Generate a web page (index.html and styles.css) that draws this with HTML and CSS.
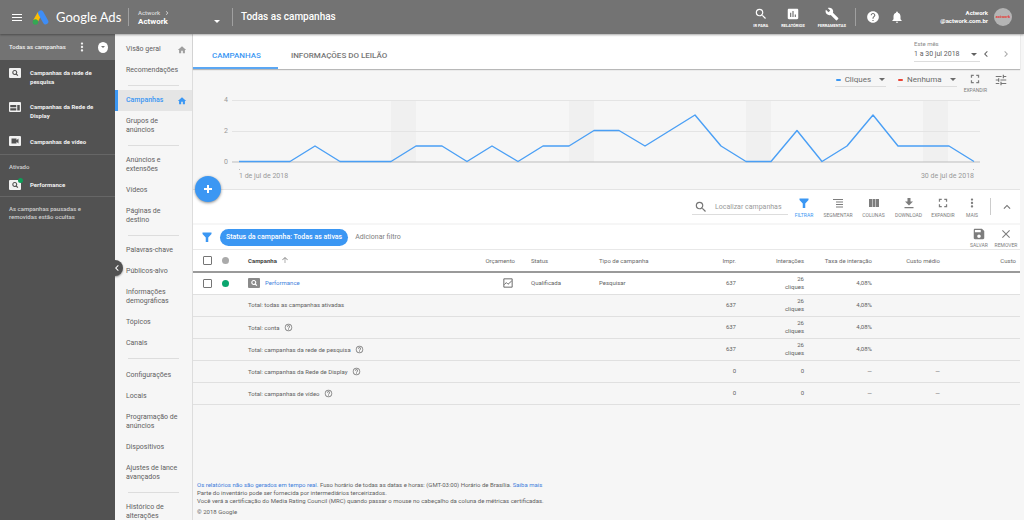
FILE: index.html
```html
<!DOCTYPE html>
<html lang="pt-BR">
<head>
<meta charset="utf-8">
<title>Todas as campanhas - Google Ads</title>
<meta name="viewport" content="width=device-width, initial-scale=1">
<link rel="stylesheet" href="styles.css">
</head>
<body>
<svg class="sprite" aria-hidden="true">
  <symbol id="i-search" viewBox="0 0 24 24"><path d="M15.5 14h-.79l-.28-.27A6.47 6.47 0 0 0 16 9.5 6.5 6.5 0 1 0 9.5 16c1.61 0 3.09-.59 4.23-1.57l.27.28v.79l5 4.99L20.49 19l-4.99-5zm-6 0C7.01 14 5 11.99 5 9.5S7.01 5 9.5 5 14 7.01 14 9.5 11.99 14 9.5 14z"/></symbol>
  <symbol id="i-chart" viewBox="0 0 24 24"><path d="M19 3H5c-1.100 0-2 .9-2 2v14c0 1.100.9 2 2 2h14c1.100 0 2-.9 2-2V5c0-1.100-.9-2-2-2zM9 17H7v-7h2v7zm4 0h-2V7h2v10zm4 0h-2v-4h2v4z"/></symbol>
  <symbol id="i-wrench" viewBox="0 0 24 24"><path d="M22.700 19l-9.100-9.100c.9-2.300.4-5-1.500-6.900-2-2-5-2.400-7.400-1.300L9 6 6 9 1.600 4.700C.4 7.100.9 10.100 2.900 12.100c1.900 1.900 4.600 2.400 6.900 1.500l9.100 9.100c.4.4 1 .4 1.400 0l2.300-2.300c.5-.4.5-1.100.1-1.400z"/></symbol>
  <symbol id="i-help" viewBox="0 0 24 24"><path d="M12 2C6.480 2 2 6.480 2 12s4.480 10 10 10 10-4.480 10-10S17.520 2 12 2zm1 17h-2v-2h2v2zm2.070-7.750l-.9.920C13.450 12.900 13 13.500 13 15h-2v-.5c0-1.100.45-2.100 1.170-2.830l1.240-1.260c.37-.36.59-.86.59-1.410 0-1.100-.9-2-2-2s-2 .9-2 2H8c0-2.210 1.790-4 4-4s4 1.790 4 4c0 .88-.36 1.680-.93 2.250z"/></symbol>
  <symbol id="i-help-o" viewBox="0 0 24 24"><path d="M11 18h2v-2h-2v2zm1-16C6.480 2 2 6.480 2 12s4.480 10 10 10 10-4.480 10-10S17.520 2 12 2zm0 18c-4.410 0-8-3.590-8-8s3.590-8 8-8 8 3.590 8 8-3.590 8-8 8zm0-14c-2.210 0-4 1.790-4 4h2c0-1.100.9-2 2-2s2 .9 2 2c0 2-3 1.750-3 5h2c0-2.250 3-2.500 3-5 0-2.210-1.790-4-4-4z"/></symbol>
  <symbol id="i-bell" viewBox="0 0 24 24"><path d="M12 22c1.100 0 2-.9 2-2h-4c0 1.100.9 2 2 2zm6-6v-5c0-3.070-1.640-5.640-4.500-6.320V4c0-.83-.67-1.500-1.500-1.500s-1.500.67-1.500 1.500v.68C7.630 5.360 6 7.920 6 11v5l-2 2v1h16v-1l-2-2z"/></symbol>
  <symbol id="i-home" viewBox="0 0 24 24"><path d="M10 20v-6h4v6h5v-8h3L12 3 2 12h3v8z"/></symbol>
  <symbol id="i-left" viewBox="0 0 24 24"><path d="M15.410 7.410L14 6l-6 6 6 6 1.410-1.410L10.830 12z"/></symbol>
  <symbol id="i-right" viewBox="0 0 24 24"><path d="M10 6L8.590 7.410 13.170 12l-4.580 4.590L10 18l6-6z"/></symbol>
  <symbol id="i-up" viewBox="0 0 24 24"><path d="M12 8l-6 6 1.410 1.410L12 10.830l4.590 4.580L18 14z"/></symbol>
  <symbol id="i-more" viewBox="0 0 24 24"><path d="M12 7.500c1.400 0 2.300-1 2.300-2.300S13.300 3 12 3s-2.300 1-2.300 2.200 1 2.300 2.300 2.300zm0 2.200c-1.300 0-2.300 1-2.300 2.300s1 2.300 2.300 2.300 2.300-1 2.300-2.300-1-2.300-2.300-2.300zm0 6.800c-1.300 0-2.300 1-2.300 2.300S10.700 21 12 21s2.300-1 2.300-2.200-1-2.300-2.300-2.300z"/></symbol>
  <symbol id="i-funnel" viewBox="0 0 24 24"><path d="M3 3h18v3l-6.500 7v9h-5v-9L3 6z"/></symbol>
  <symbol id="i-segment" viewBox="0 0 24 24"><path d="M2 4h20v2H2zM8 9h14v2H8zM8 14h14v2H8zM8 19h14v2H8z"/></symbol>
  <symbol id="i-columns" viewBox="0 0 24 24"><path d="M2 4h6v16H2zM9 4h6v16H9zM16 4h6v16h-6z"/></symbol>
  <symbol id="i-download" viewBox="0 0 24 24"><path d="M20 9h-5V2H9v7H4l8 8zM3 20v2.500h18V20z"/></symbol>
  <symbol id="i-expand" viewBox="0 0 24 24"><path d="M2 2h7v3H5v4H2zM15 2h7v7h-3V5h-4zM2 15h3v4h4v3H2zM19 15h3v7h-7v-3h4z"/></symbol>
  <symbol id="i-tune" viewBox="0 0 24 24"><path d="M3 17v2h6v-2H3zM3 5v2h10V5H3zm10 16v-2h8v-2h-8v-2h-2v6h2zM7 9v2H3v2h4v2h2V9H7zm14 4v-2H11v2h10zm-6-4h2V7h4V5h-4V3h-2v6z"/></symbol>
  <symbol id="i-save" viewBox="0 0 24 24"><path d="M17 3H5c-1.110 0-2 .9-2 2v14c0 1.100.89 2 2 2h14c1.100 0 2-.9 2-2V7l-4-4zm-5 16c-1.660 0-3-1.340-3-3s1.340-3 3-3 3 1.340 3 3-1.340 3-3 3zm3-10H5V5h10v4z"/></symbol>
  <symbol id="i-close" viewBox="0 0 24 24"><path d="M20 5.500L18.500 4 12 10.500 5.500 4 4 5.500l6.500 6.500L4 18.500 5.500 20l6.500-6.500 6.500 6.500 1.500-1.500-6.500-6.500z"/></symbol>
  <symbol id="i-campaign" viewBox="0 0 24 20"><path fill-rule="evenodd" d="M2 0h20a2 2 0 0 1 2 2v16a2 2 0 0 1-2 2H2a2 2 0 0 1-2-2V2a2 2 0 0 1 2-2zM11.500 4a5 5 0 1 0 2.600 9.300L17 16.200l1.600-1.600-2.900-2.900A5 5 0 0 0 11.500 4zm0 2.200a2.800 2.800 0 1 1 0 5.600 2.800 2.800 0 0 1 0-5.600z"/></symbol>
  <symbol id="i-display" viewBox="0 0 24 20"><path fill-rule="evenodd" d="M2 0h20a2 2 0 0 1 2 2v16a2 2 0 0 1-2 2H2a2 2 0 0 1-2-2V2a2 2 0 0 1 2-2zM2.500 6v4.500h12V6zM2.500 12.500V17h12v-4.500zM16.500 6v11h5V6z"/></symbol>
  <symbol id="i-video" viewBox="0 0 24 20"><path fill-rule="evenodd" d="M2 0h20a2 2 0 0 1 2 2v16a2 2 0 0 1-2 2H2a2 2 0 0 1-2-2V2a2 2 0 0 1 2-2zM5 5v10h10v-3.500l4 3.500V5l-4 3.500V5z"/></symbol>
  <symbol id="i-trend" viewBox="0 0 24 24"><path fill="none" stroke="currentColor" stroke-width="2.200" d="M2 2h20v20H2zM3 16l5-5 4 4 9-8"/></symbol>
  <symbol id="i-sort" viewBox="0 0 24 24"><path d="M11 21V7l-6 6-1.500-1.500L12 3l8.500 8.500L19 13l-6-6v14z"/></symbol>
</svg>

<header class="topbar">
  <div class="brand">
    <button class="burger" aria-label="Menu"><span></span><span></span><span></span></button>
    <svg class="logo" viewBox="0 0 48 44" aria-hidden="true">
      <path d="M22 10L9 33" fill="none" stroke="#fbbc04" stroke-width="14"/>
      <path d="M25 9L39 34" fill="none" stroke="#3f8df5" stroke-width="16" stroke-linecap="round"/>
      <circle cx="9" cy="35" r="8" fill="#34a853"/>
    </svg>
    <span class="brand-name">Google Ads</span>
  </div>
  <button class="account">
    <span class="account-names"><span class="parent">Actwork <svg class="ic8"><use href="#i-right"/></svg></span><strong>Actwork</strong></span>
    <span class="caret"></span>
  </button>
  <h1 class="title">Todas as campanhas</h1>
  <div class="tools">
    <button class="tool"><svg class="ic14"><use href="#i-search"/></svg>IR PARA</button>
    <button class="tool"><svg class="ic14"><use href="#i-chart"/></svg>RELATÓRIOS</button>
    <button class="tool"><svg class="ic14"><use href="#i-wrench"/></svg>FERRAMENTAS</button>
  </div>
  <div class="user">
    <button class="plain" aria-label="Ajuda"><svg class="ic14"><use href="#i-help"/></svg></button>
    <button class="plain" aria-label="Notificações"><svg class="ic14"><use href="#i-bell"/></svg></button>
    <span class="user-text">Actwork<br>@actwork.com.br</span>
    <span class="avatar">actwork</span>
  </div>
</header>

<div class="shell">
  <aside class="side">
    <div class="side-head">
      <span class="side-title">Todas as campanhas</span>
      <button class="plain" aria-label="Mais opções"><svg class="ic12"><use href="#i-more"/></svg></button>
      <button class="disc" aria-label="Abrir"><span class="caret"></span></button>
    </div>
    <nav class="side-list">
      <a href="#"><svg class="camp"><use href="#i-campaign"/></svg><span>Campanhas da rede de pesquisa</span></a>
      <a href="#"><svg class="camp"><use href="#i-display"/></svg><span>Campanhas da Rede de Display</span></a>
      <a href="#"><svg class="camp"><use href="#i-video"/></svg><span>Campanhas de vídeo</span></a>
    </nav>
    <div class="side-active">
      <p>Ativado</p>
      <a href="#"><span class="badged"><svg class="camp"><use href="#i-campaign"/></svg><i class="badge"></i></span><span>Performance</span></a>
    </div>
    <p class="side-note">As campanhas pausadas e removidas estão ocultas</p>
  </aside>

  <nav class="menu">
    <button class="handle" aria-label="Recolher"><svg class="ic12"><use href="#i-left"/></svg></button>
    <ul>
      <li><a href="#">Visão geral<svg class="home"><use href="#i-home"/></svg></a></li>
      <li><a href="#">Recomendações</a></li>
    </ul>
    <ul>
      <li><a class="current" href="#">Campanhas<svg class="home"><use href="#i-home"/></svg></a></li>
      <li><a href="#">Grupos de<br>anúncios</a></li>
    </ul>
    <ul>
      <li><a href="#">Anúncios e<br>extensões</a></li>
      <li><a href="#">Vídeos</a></li>
      <li><a href="#">Páginas de<br>destino</a></li>
    </ul>
    <ul>
      <li><a href="#">Palavras-chave</a></li>
      <li><a href="#">Públicos-alvo</a></li>
      <li><a href="#">Informações<br>demográficas</a></li>
      <li><a href="#">Tópicos</a></li>
      <li><a href="#">Canais</a></li>
    </ul>
    <ul class="wide">
      <li><a href="#">Configurações</a></li>
      <li><a href="#">Locais</a></li>
      <li><a href="#">Programação de<br>anúncios</a></li>
      <li><a href="#">Dispositivos</a></li>
      <li><a href="#">Ajustes de lance<br>avançados</a></li>
    </ul>
    <ul>
      <li><a href="#">Histórico de<br>alterações</a></li>
    </ul>
  </nav>

  <main class="main">
    <div class="tabs">
      <a class="tab active" href="#">CAMPANHAS</a>
      <a class="tab" href="#">INFORMAÇÕES DO LEILÃO</a>
      <div class="period">
        <button class="range"><small>Este mês</small><span>1 a 30 jul 2018<i class="caret"></i></span></button>
        <button class="plain" aria-label="Período anterior"><svg class="ic12"><use href="#i-left"/></svg></button>
        <button class="plain dim" aria-label="Próximo período"><svg class="ic12"><use href="#i-right"/></svg></button>
      </div>
    </div>

    <section class="chart">
      <div class="chart-controls">
        <button class="metric"><i class="dash blue"></i>Cliques<i class="caret"></i></button>
        <button class="metric"><i class="dash red"></i>Nenhuma<i class="caret"></i></button>
        <button class="action"><svg class="ic10"><use href="#i-expand"/></svg>EXPANDIR</button>
        <button class="plain tune" aria-label="Ajustar"><svg class="ic14"><use href="#i-tune"/></svg></button>
      </div>
      <div class="plot">
        <div class="axis"><span>4</span><span>2</span><span>0</span></div>
        <svg class="graph" viewBox="0 0 748 64" preserveAspectRatio="none" role="img" aria-label="Cliques por dia">
          <path d="M159 1h25v62h-25zM337 1h25v62h-25zM514 1h25v62h-25zM691 1h25v62h-25z" fill="#f0f0f0"/>
          <path d="M0 1.500h748M0 32.500h748" stroke="#e4e4e4"/>
          <path d="M0 63h748" stroke="#bdbdbd"/>
          <polyline fill="none" stroke="#4a9ff5" stroke-width="1.400" stroke-linejoin="round" points="7,62.500 32,62.500 58,62.500 83,47 108,62.500 134,62.500 159,62.500 184,47 210,47 235,62.500 260,47 286,62.500 311,47 337,47 362,31.500 387,31.500 413,47 438,31.500 463,16 489,47 514,62.500 539,62.500 565,31.500 590,62.500 615,47 641,16 666,47 691,47 717,47 742,62.500"/>
        </svg>
      </div>
      <div class="dates"><span>1 de jul de 2018</span><span>30 de jul de 2018</span></div>
      <button class="fab" aria-label="Nova campanha"></button>
    </section>

    <div class="toolbar">
      <label class="search"><svg class="ic14"><use href="#i-search"/></svg><input type="text" placeholder="Localizar campanhas" aria-label="Localizar campanhas"></label>
      <div class="actions">
        <button class="action on"><svg class="ic12"><use href="#i-funnel"/></svg>FILTRAR</button>
        <button class="action"><svg class="ic12"><use href="#i-segment"/></svg>SEGMENTAR</button>
        <button class="action"><svg class="ic12"><use href="#i-columns"/></svg>COLUNAS</button>
        <button class="action"><svg class="ic12"><use href="#i-download"/></svg>DOWNLOAD</button>
        <button class="action"><svg class="ic12 pad"><use href="#i-expand"/></svg>EXPANDIR</button>
        <button class="action"><svg class="ic12"><use href="#i-more"/></svg>MAIS</button>
      </div>
      <button class="plain fold" aria-label="Recolher gráfico"><svg class="ic14"><use href="#i-up"/></svg></button>
    </div>

    <div class="filters">
      <svg class="ic12 funnel"><use href="#i-funnel"/></svg>
      <button class="chip">Status da campanha: Todas as ativas</button>
      <button class="add">Adicionar filtro</button>
      <button class="action first"><svg class="ic14"><use href="#i-save"/></svg>SALVAR</button>
      <button class="action"><svg class="ic14 pad"><use href="#i-close"/></svg>REMOVER</button>
    </div>

    <table class="grid">
      <colgroup><col class="c-check"><col class="c-dot"><col><col class="c-m"><col class="c-m"><col class="c-type"><col class="c-m"><col class="c-m"><col class="c-m"><col class="c-m"><col class="c-last"></colgroup>
      <thead>
        <tr>
          <th><input type="checkbox" aria-label="Selecionar todas"></th>
          <th><i class="dot"></i></th>
          <th class="sorted">Campanha <svg class="ic8"><use href="#i-sort"/></svg></th>
          <th class="num">Orçamento</th><th>Status</th><th>Tipo de campanha</th>
          <th class="num">Impr.</th><th class="num">Interações</th><th class="num">Taxa de interação</th><th class="num">Custo médio</th><th class="num">Custo</th>
        </tr>
      </thead>
      <tbody>
        <tr class="item">
          <td><input type="checkbox" aria-label="Selecionar Performance"></td>
          <td><i class="dot green"></i></td>
          <td><a class="name" href="#"><svg class="camp"><use href="#i-campaign"/></svg>Performance</a></td>
          <td class="num"><svg class="ic10 trend"><use href="#i-trend"/></svg></td><td>Qualificada</td><td>Pesquisar</td>
          <td class="num">637</td><td class="num">26<br>cliques</td><td class="num">4,08%</td><td></td><td></td>
        </tr>
        <tr><td></td><td></td><td>Total: todas as campanhas ativadas</td><td></td><td></td><td></td><td class="num">637</td><td class="num">26<br>cliques</td><td class="num">4,08%</td><td></td><td></td></tr>
        <tr><td></td><td></td><td>Total: conta <svg class="q"><use href="#i-help-o"/></svg></td><td></td><td></td><td></td><td class="num">637</td><td class="num">26<br>cliques</td><td class="num">4,08%</td><td></td><td></td></tr>
        <tr><td></td><td></td><td>Total: campanhas da rede de pesquisa <svg class="q"><use href="#i-help-o"/></svg></td><td></td><td></td><td></td><td class="num">637</td><td class="num">26<br>cliques</td><td class="num">4,08%</td><td></td><td></td></tr>
        <tr><td></td><td></td><td>Total: campanhas da Rede de Display <svg class="q"><use href="#i-help-o"/></svg></td><td></td><td></td><td></td><td class="num">0</td><td class="num">0</td><td class="num">—</td><td class="num">—</td><td></td></tr>
        <tr><td></td><td></td><td>Total: campanhas de vídeo <svg class="q"><use href="#i-help-o"/></svg></td><td></td><td></td><td></td><td class="num">0</td><td class="num">0</td><td class="num">—</td><td class="num">—</td><td></td></tr>
      </tbody>
    </table>

    <footer class="foot">
      <p><a href="#">Os relatórios não são gerados em tempo real.</a> Fuso horário de todas as datas e horas: (GMT-03:00) Horário de Brasília. <a href="#">Saiba mais</a><br>Parte do inventário pode ser fornecida por intermediários terceirizados.<br>Você verá a certificação do Media Rating Council (MRC) quando passar o mouse no cabeçalho da coluna de métricas certificadas.</p>
      <p>© 2018 Google</p>
    </footer>
  </main>
</div>
</body>
</html>
```
FILE: styles.css
```css
* { box-sizing: border-box; }
body { margin: 0; height: 100vh; overflow: hidden; display: flex; flex-direction: column; background: #f6f6f6; color: #5f5f5f; font-family: Roboto, "Liberation Sans", sans-serif; font-size: 7px; line-height: 8px; }
button { margin: 0; padding: 0; border: 0; background: none; color: inherit; font: inherit; cursor: pointer; }
a { color: inherit; text-decoration: none; }
p, ul, h1 { margin: 0; padding: 0; }
ul { list-style: none; }
svg { fill: currentColor; flex: none; }
.sprite { position: absolute; width: 0; height: 0; }
.ic8 { width: 8px; height: 8px; }
.ic10 { width: 10px; height: 10px; }
.ic12 { width: 12px; height: 12px; }
.ic14 { width: 14px; height: 14px; }
.pad { padding: 1px; }
.camp { width: 12px; height: 10px; }
.plain { display: flex; align-items: center; justify-content: center; }
.caret { display: inline-block; border: 3px solid transparent; border-top-color: currentColor; border-bottom: 0; }

/* Top bar */
.topbar { flex: none; height: 34px; display: flex; align-items: center; background: #737373; color: #fff; box-shadow: 0 1px 2px rgba(0, 0, 0, .35); position: relative; z-index: 3; }
.brand { width: 128px; display: flex; align-items: center; }
.burger { width: 10px; margin: 0 10px 0 12px; display: flex; flex-direction: column; gap: 2px; }
.burger span { height: 1px; background: #fff; }
.logo { width: 17px; height: 15px; margin-right: 7px; }
.brand-name { font: 13px/16px Lato, sans-serif; white-space: nowrap; }
.account { width: 104px; height: 18px; padding: 0 12px 0 9px; border-left: 1px solid #a0a0a0; display: flex; align-items: center; justify-content: space-between; text-align: left; }
.account-names { display: flex; flex-direction: column; }
.account-names strong { font-size: 8px; line-height: 9px; }
.parent { display: flex; align-items: center; gap: 3px; color: #d8d8d8; font-size: 6px; font-weight: 500; }
.account .caret { align-self: flex-end; margin-bottom: 3px; }
.title { height: 18px; padding-left: 8px; border-left: 1px solid #a0a0a0; font-size: 10px; font-weight: 500; line-height: 17px; }
.tools { margin-left: auto; display: flex; gap: 13px; height: 18px; padding-right: 9px; border-right: 1px solid #a0a0a0; align-items: center; }
.tool { display: flex; flex-direction: column; align-items: center; gap: 2px; font-size: 4px; font-weight: 700; line-height: 5px; }
.user { display: flex; align-items: center; gap: 10px; padding: 0 12px 0 10px; }
.user-text { width: 60px; text-align: right; font-size: 6px; font-weight: 700; margin: 0 -4px 0 14px; }
.avatar { width: 18px; height: 18px; border-radius: 50%; background: #b4b4b4; color: #e53935; font-size: 4px; font-weight: 700; line-height: 17px; text-align: center; }

/* Account tree */
.shell { flex: 1; min-height: 0; display: flex; }
.side { flex: none; width: 115px; background: #525252; color: #f1f1f1; position: relative; z-index: 2; font-size: 6px; font-weight: 500; }
.side-head { height: 26px; padding: 0 7px 0 9px; display: flex; align-items: center; gap: 10px; background: #737373; white-space: nowrap; }
.side-title { flex: 1; }
.disc { width: 11px; height: 11px; border-radius: 50%; background: #fff; color: #737373; display: flex; align-items: center; justify-content: center; }
.disc .caret { border-width: 2px; border-bottom: 0; }
.side a { display: flex; gap: 9px; font-weight: 700; line-height: 9px; }
.side-list { padding: 8px 9px; display: flex; flex-direction: column; gap: 16px; border-bottom: 1px solid #666; }
.side-list a:last-child { align-items: center; }
.side-active { padding: 8px 9px 6px; border-bottom: 1px solid #666; color: #d0d0d0; }
.side-active a { padding-top: 9px; color: #f1f1f1; }
.badged { position: relative; height: 10px; }
.badge { position: absolute; top: -2px; right: -2px; width: 5px; height: 5px; border-radius: 50%; background: #0f9d58; }
.side-note { padding: 8px 9px; color: #d0d0d0; }

/* Section menu */
.menu { flex: none; width: 78px; padding-top: 5px; border-right: 1px solid #ddd; position: relative; }
.menu ul + ul { padding-top: 9px; background: linear-gradient(#ddd, #ddd) no-repeat 13px 4px / 51px 1px; }
.menu ul.wide { padding-top: 11px; }
.menu a { display: flex; justify-content: space-between; padding: 6px 5px 6px 11px; line-height: 9px; white-space: nowrap; }
.menu .current { padding-left: 8px; border-left: 3px solid #3b97f3; background: #e5e5e5; color: #3b97f3; font-weight: 500; }
.home { width: 10px; height: 10px; margin-bottom: -1px; color: #9e9e9e; }
.current .home { color: #3b97f3; }
.handle { position: absolute; left: -8px; top: 226px; width: 16px; height: 16px; border-radius: 50%; background: #525252; color: #fff; display: flex; align-items: center; justify-content: flex-end; box-shadow: 0 1px 2px rgba(0, 0, 0, .4); }

/* Tabs */
.main { flex: 1; min-width: 0; margin-right: 4px; display: flex; flex-direction: column; }
.tabs { height: 35px; display: flex; background: #fff; box-shadow: 0 1px 1px rgba(0, 0, 0, .25); z-index: 1; }
.tab { padding: 17px 13px 0; font-size: 8px; line-height: 9px; font-weight: 500; color: #757575; }
.tab.active { padding: 17px 17px 0 19px; color: #3b97f3; border-bottom: 2px solid #5ba7f3; }
.period { margin-left: auto; padding: 6px 8px 0 0; display: flex; align-items: flex-start; color: #616161; }
.period .plain { margin-top: 8px; }
.period .dim { margin-left: 8px; color: #aaa; }
.range { width: 66px; padding-bottom: 3px; border-bottom: 1px solid #ddd; text-align: left; }
.range small { display: block; font-size: 6px; color: #8a8a8a; }
.range span { display: flex; justify-content: space-between; align-items: center; padding: 2px 3px 0 0; }

/* Chart */
.chart { position: relative; height: 121px; border-bottom: 1px solid #e4e4e4; }
.chart-controls { height: 30px; padding: 4px 12px 0; display: flex; justify-content: flex-end; align-items: flex-start; gap: 7px; color: #6b6b6b; }
.metric { height: 14px; display: flex; align-items: center; gap: 4px; padding: 0 1px; border-bottom: 1px solid #ddd; font-size: 8px; }
.metric + .metric { margin-left: 4px; }
.metric .caret { margin-left: 4px; }
.dash { width: 5px; height: 2px; border-radius: 1px; }
.dash.blue { background: #3b97f3; }
.dash.red { background: #ea4335; }
.action { display: flex; flex-direction: column; align-items: center; gap: 3px; color: #7d7d7d; font-size: 5px; line-height: 6px; }
.chart .action { padding-top: 1px; }
.tune { color: #757575; }
.plot { display: flex; gap: 4px; padding: 0 40px 0 30px; }
.axis { width: 5px; height: 70px; margin: -3px 0; display: flex; flex-direction: column; justify-content: space-between; text-align: right; color: #999; }
.graph { flex: 1 1 0; min-width: 0; height: 64px; }
.dates { display: flex; justify-content: space-between; padding: 6px 46px 0; color: #999; }
.dates span { padding-top: 3px; background: linear-gradient(#bbb, #bbb) no-repeat left top / 1px 1px; }
.dates span:last-child { background-position: right top; }
.fab { position: absolute; left: 2px; bottom: -13px; width: 26px; height: 26px; border-radius: 50%; background: linear-gradient(#fff, #fff) no-repeat center / 8px 2px, linear-gradient(#fff, #fff) no-repeat center / 2px 8px, #3b97f3; box-shadow: 0 1px 3px rgba(0, 0, 0, .45); z-index: 2; }

/* Toolbar */
.toolbar { height: 33px; display: flex; background: #fff; color: #757575; }
.search { margin-left: auto; width: 96px; height: 25px; padding: 9px 0 0 2px; border-bottom: 1px solid #ddd; display: flex; align-items: center; gap: 7px; }
.search input { flex: 1; min-width: 0; padding: 0; border: 0; outline: 0; background: none; font: inherit; color: inherit; }
.search input::placeholder { color: #999; opacity: 1; }
.actions { display: grid; grid-template-columns: 32px 36px 35px 35px 34px 24px; margin: 7px 6px 0 0; align-content: start; }
.on, .funnel { color: #3b97f3; }
.fold { width: 30px; height: 17px; margin-top: 8px; border-left: 1px solid #ccc; padding-left: 3px; }

/* Filters */
.filters { height: 25px; margin-top: 2px; padding-right: 3px; display: flex; align-items: center; background: #fff; border-bottom: 1px solid #e8e8e8; }
.funnel { margin: 0 7px 0 8px; }
.chip { height: 17px; padding: 0 6px; border-radius: 9px; background: #3b97f3; color: #fff; font-weight: 500; }
.add { margin-left: 7px; color: #7d7d7d; }
.filters .action { width: 22px; gap: 1px; }
.filters .first { margin-left: auto; margin-right: 5px; }

/* Table */
.grid { width: 100%; table-layout: fixed; border-collapse: collapse; font-size: 6px; line-height: 8px; }
.c-check { width: 25px; }
.c-dot { width: 22px; }
.c-m { width: 68px; }
.c-type { width: 85px; }
.c-last { width: 72px; }
.grid th, .grid td { height: 22px; padding: 0 8px; text-align: left; font-weight: 400; border-bottom: 1px solid #e0e0e0; white-space: nowrap; }
.grid th { background: #fff; color: #6b6b6b; border-bottom: 2px solid #9a9a9a; }
.grid .sorted { color: #424242; font-weight: 700; }
.sorted svg { vertical-align: -1px; margin-left: 3px; color: #888; }
.grid .item td { background: #fff; }
.grid .num { text-align: right; }
.grid tr > :first-child { padding: 0 0 0 10px; }
.grid th:last-child { padding-right: 4px; }
.grid input { appearance: none; display: block; width: 9px; height: 9px; margin: 0; border: 1px solid #757575; border-radius: 1px; background: #fff; }
.dot { display: block; width: 7px; height: 7px; margin-left: -4px; border-radius: 50%; background: #aaa; }
.dot.green { background: #0aa66e; }
.name { display: flex; align-items: center; gap: 5px; color: #3f7fdc; }
.name svg { color: #8a8a8a; }
.trend { vertical-align: middle; margin-right: 2px; }
.q { width: 9px; height: 9px; vertical-align: -2px; margin-left: 3px; color: #777; }

.foot { margin-top: auto; padding: 0 4px; font-size: 6px; line-height: 8px; }
.foot p + p { padding: 3px 0 4px; }
.foot a { color: #3f7fdc; }
```
